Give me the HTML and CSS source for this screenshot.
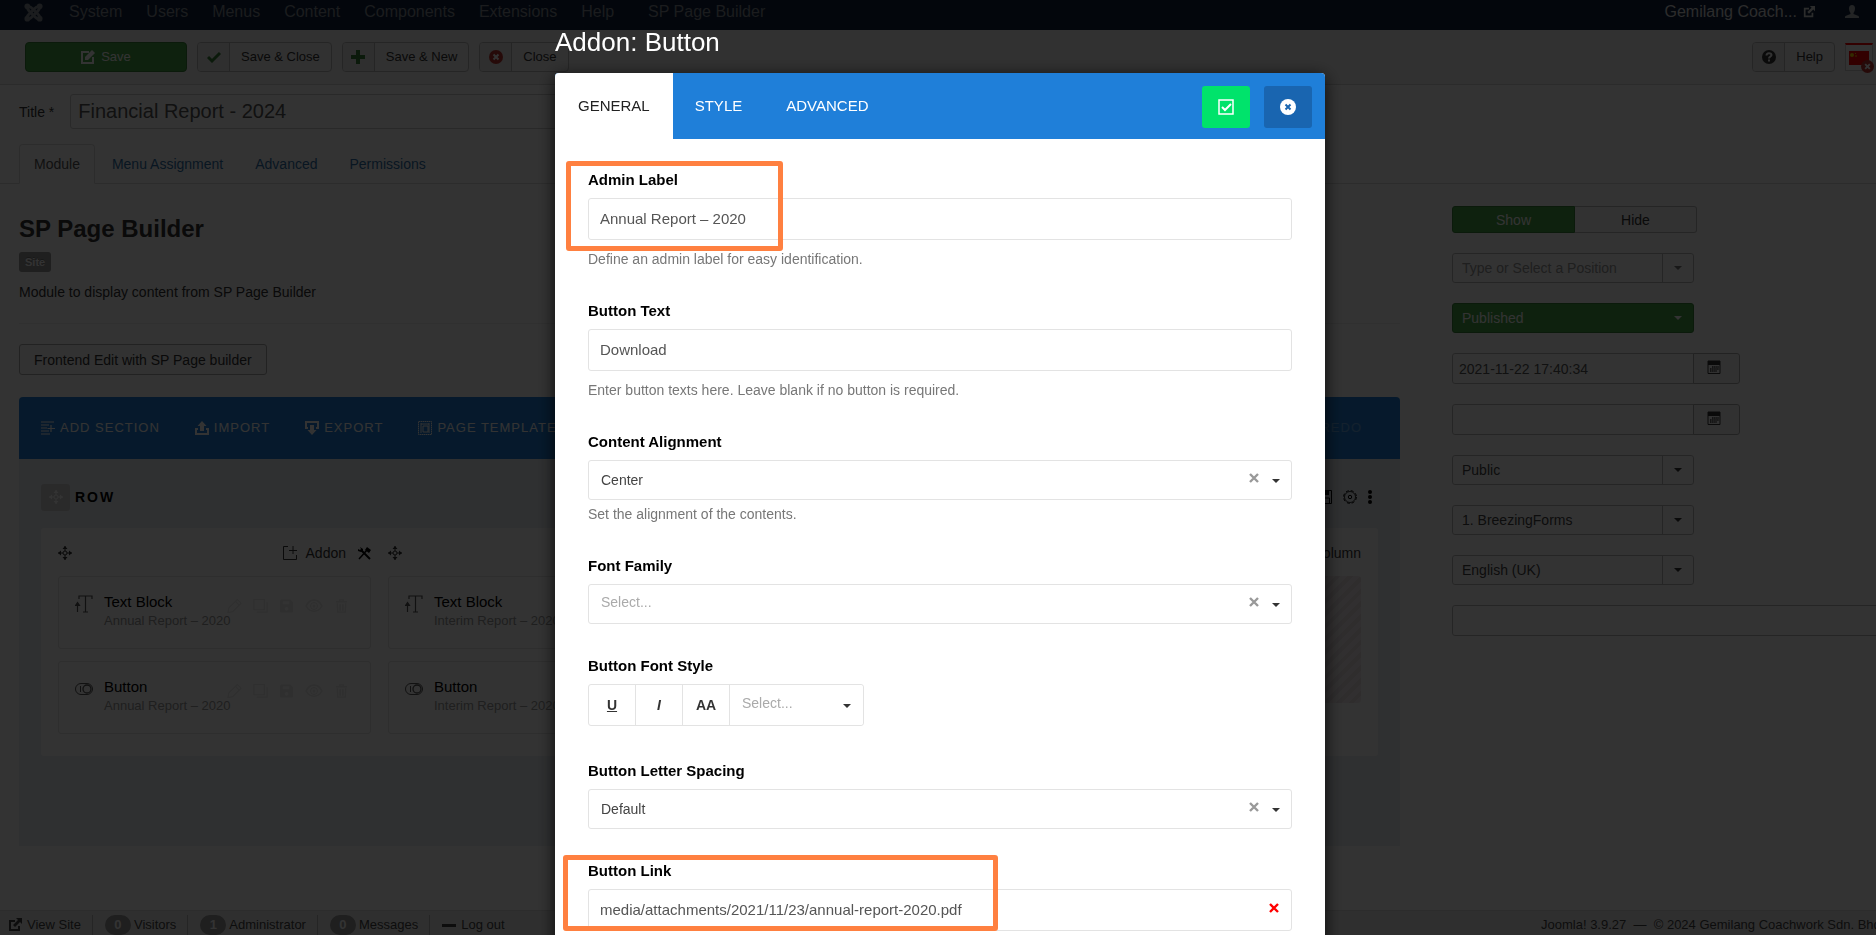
FILE: index.html
```
<!DOCTYPE html>
<html lang="en">
<head>
  <meta charset="UTF-8">
  <title>Modules: SP Page Builder</title>
  <meta name="viewport" content="width=device-width, initial-scale=1.0">
  <link rel="stylesheet" href="styles.css">
</head>
<body>
  <!-- icon set -->
  <svg class="sprite" aria-hidden="true">
    <symbol id="i-joomla" viewBox="0 0 20 20"><g fill="none" stroke="currentColor" stroke-width="3"><path d="M4 4c3-1 4 1 6 3l5 5c2 2 2 3 1 4"/><path d="M16 4c-3-1-4 1-6 3l-5 5c-2 2-2 3-1 4"/><path d="M4 4c-1 3 1 4 3 6l5 5c2 2 3 2 4 1"/><path d="M16 4c1 3-1 4-3 6l-5 5c-2 2-3 2-4 1"/></g><g fill="currentColor"><circle cx="3.500" cy="3.500" r="3"/><circle cx="16.500" cy="3.500" r="3"/><circle cx="3.500" cy="16.500" r="3"/><circle cx="16.500" cy="16.500" r="3"/></g></symbol>
    <symbol id="i-out" viewBox="0 0 14 14"><path d="M7 3H2v9h9V8" fill="none" stroke="currentColor" stroke-width="2"/><path d="M8 0h6v6l-2-2-5 5-2-2 5-5z" fill="currentColor"/></symbol>
    <symbol id="i-user" viewBox="0 0 14 14"><path d="M7 0c2 0 3 1.500 3 3.500S9 7 8.500 8v1l5 2c.5.5.5 1 .5 2H0c0-1 0-1.500.5-2l5-2V8C5 7 4 5.500 4 3.500S5 0 7 0z" fill="currentColor"/></symbol>
    <symbol id="i-edit" viewBox="0 0 14 14"><path d="M8 2H1v11h11V7" fill="none" stroke="currentColor" stroke-width="2"/><path d="M4 7l6-6 1-1 3 3-1 1-6 6H4z" fill="currentColor"/></symbol>
    <symbol id="i-check" viewBox="0 0 14 14"><path d="M1 7l4 4 8-8" fill="none" stroke="currentColor" stroke-width="3"/></symbol>
    <symbol id="i-plus" viewBox="0 0 14 14"><path d="M7 0v14M0 7h14" stroke="currentColor" stroke-width="4"/></symbol>
    <symbol id="i-cancel" viewBox="0 0 14 14"><circle cx="7" cy="7" r="7" fill="currentColor"/><path d="M4.500 4.500l5 5M9.500 4.500l-5 5" stroke="#fff" stroke-width="2"/></symbol>
    <symbol id="i-help" viewBox="0 0 14 14"><circle cx="7" cy="7" r="7" fill="currentColor"/><path d="M4.500 5.500C4.500 2.500 9.500 2.500 9.500 5c0 1.500-2.500 1.500-2.500 3.500M7 9.500v2" fill="none" stroke="#fff" stroke-width="2"/></symbol>
    <symbol id="i-calendar" viewBox="0 0 14 14"><path d="M1 1h12v12.500H1z" fill="none" stroke="currentColor"/><path d="M1 1h12v4H1z" fill="currentColor"/><path d="M5 7h7M3 9h9M3 11h7" stroke="currentColor" stroke-width="1.500" stroke-dasharray="1.500 .6"/></symbol>
    <symbol id="i-section" viewBox="0 0 14 14"><path d="M0 1h13M0 4h8M0 7h6M0 10h8M0 13h9M10 4v7M6.500 7.500H14" stroke="currentColor" stroke-width="1.200"/></symbol>
    <symbol id="i-import" viewBox="0 0 14 14"><path d="M7 0l4.500 5H9v5H5V5H2.500z" fill="currentColor"/><path d="M3 8H1v5h12V8h-2" fill="none" stroke="currentColor" stroke-width="2"/></symbol>
    <symbol id="i-export" viewBox="0 0 14 14"><path d="M7 14l4.500-5H9V4H5v5H2.500z" fill="currentColor"/><path d="M3 7H1V1h12v6h-2" fill="none" stroke="currentColor" stroke-width="2"/></symbol>
    <symbol id="i-pages" viewBox="0 0 14 14"><path d="M.5.5h13v13H.5z" fill="none" stroke="currentColor" stroke-dasharray="1.500 .5"/><path d="M3 2v10M11 2v10M3 3h8M5 5h5v6H5z" fill="none" stroke="currentColor"/></symbol>
    <symbol id="i-move" viewBox="0 0 14 14"><circle cx="7" cy="7" r="2" fill="none" stroke="currentColor"/><path d="M7 0v5M7 9v5M0 7h5M9 7h5" fill="none" stroke="currentColor"/><path d="M7 0l2.500 3h-5zM7 14l2.500-3h-5zM0 7l3-2.500v5zM14 7l-3-2.500v5z" fill="currentColor"/></symbol>
    <symbol id="i-addon" viewBox="0 0 14 14"><path d="M5 .5H.5v13h13V9M10 0v8M6 4.500h8" fill="none" stroke="currentColor"/></symbol>
    <symbol id="i-tools" viewBox="0 0 14 14"><path d="M4 4l9 9" stroke="currentColor" stroke-width="2"/><path d="M10 4l-8 9" stroke="currentColor" stroke-width="1.500"/><path d="M3 1l3 2v2L4 6 1 5V3l2 1 1-1zM10 1l4 3-2 3-4-3z" fill="currentColor"/></symbol>
    <symbol id="i-text" viewBox="0 0 18 18"><path d="M4 4V1h13v3M10.500 1v16M8 17h5M2.500 17V8M.5 10.500l2-3 2 3z" fill="none" stroke="currentColor" stroke-width="1.200"/></symbol>
    <symbol id="i-toggle" viewBox="0 0 18 12"><rect x=".5" y=".5" width="17" height="11" rx="5.500" fill="none" stroke="currentColor"/><circle cx="12" cy="6" r="4" fill="none" stroke="currentColor" stroke-width="1.300"/><path d="M5.500 3v6" stroke="currentColor"/></symbol>
    <symbol id="i-pencil" viewBox="0 0 16 16"><path d="M1 15l1-5 9-9 4 4-9 9zM9 3l4 4" fill="none" stroke="currentColor" stroke-width="1.200"/></symbol>
    <symbol id="i-copy" viewBox="0 0 16 16"><path d="M1 1h11v11H1zM4 14.500h11V4" fill="none" stroke="currentColor" stroke-width="1.200"/></symbol>
    <symbol id="i-save" viewBox="0 0 16 16"><path d="M1 3q0-2 2-2h9l3 3v9q0 2-2 2H3q-2 0-2-2zM4 3v3h7V3zM8 9a2 2 0 1 0 .1 0z" fill="currentColor" fill-rule="evenodd"/></symbol>
    <symbol id="i-eye" viewBox="0 0 18 16"><path d="M1 8c4-8 12-8 16 0-4 7-12 7-16 0z" fill="none" stroke="currentColor" stroke-width="1.500"/><circle cx="9" cy="8" r="3.500" fill="none" stroke="currentColor"/><circle cx="9" cy="8" r="1.500" fill="currentColor"/></symbol>
    <symbol id="i-trash" viewBox="0 0 16 16"><path d="M2 3.500h12M6 3V1.500h4V3M3.500 5l.5 9.500h8l.5-9.500M6.500 6v7M9.500 6v7" fill="none" stroke="currentColor" stroke-width="1.500"/></symbol>
    <symbol id="i-floppy" viewBox="0 0 14 14"><path d="M.5.500h13v13H.500z" fill="none" stroke="currentColor"/><path d="M3 1h8v4H3z" fill="currentColor"/><path d="M2.500 13V8h9v5" fill="none" stroke="currentColor"/></symbol>
    <symbol id="i-gear" viewBox="0 0 14 14"><circle cx="7" cy="7" r="6.400" fill="none" stroke="currentColor" stroke-dasharray="3 2.026"/><circle cx="7" cy="7" r="5.500" fill="none" stroke="currentColor" stroke-width=".8"/><circle cx="7" cy="7" r="1.700" fill="none" stroke="currentColor"/></symbol>
    <symbol id="i-dots" viewBox="0 0 4 14"><g fill="currentColor"><circle cx="2" cy="2" r="2"/><circle cx="2" cy="7" r="2"/><circle cx="2" cy="12" r="2"/></g></symbol>
    <symbol id="i-apply" viewBox="0 0 16 16"><path d="M1 1h14v14H1z" fill="none" stroke="currentColor" stroke-width="1.500"/><path d="M4 8l3 3 6-6" fill="none" stroke="currentColor" stroke-width="2"/></symbol>
    <symbol id="i-close" viewBox="0 0 16 16"><circle cx="8" cy="8" r="8" fill="currentColor"/><path d="M5.500 5.500l5 5M10.500 5.500l-5 5" stroke="#1965b0" stroke-width="2"/></symbol>
    <symbol id="i-x" viewBox="0 0 10 10"><path d="M1 1l8 8M9 1L1 9" stroke="currentColor" stroke-width="2.400"/></symbol>
  </svg>

  <nav class="navbar">
    <a href="#" class="brand" aria-label="Joomla"><svg><use href="#i-joomla"/></svg></a>
    <a href="#">System</a>
    <a href="#">Users</a>
    <a href="#">Menus</a>
    <a href="#">Content</a>
    <a href="#">Components</a>
    <a href="#">Extensions</a>
    <a href="#">Help</a>
    <a href="#" class="extra">SP Page Builder</a>
    <a href="#" class="site">Gemilang Coach... <svg class="ico"><use href="#i-out"/></svg></a>
    <a href="#" class="user" aria-label="User menu"><svg class="ico"><use href="#i-user"/></svg></a>
  </nav>

  <div class="subhead">
    <button class="btn-save"><svg class="ico"><use href="#i-edit"/></svg>Save</button>
    <button class="btn"><span class="btn-ico green"><svg class="ico"><use href="#i-check"/></svg></span><span class="btn-text">Save &amp; Close</span></button>
    <button class="btn"><span class="btn-ico green"><svg class="ico"><use href="#i-plus"/></svg></span><span class="btn-text">Save &amp; New</span></button>
    <button class="btn"><span class="btn-ico red"><svg class="ico"><use href="#i-cancel"/></svg></span><span class="btn-text">Close</span></button>
    <button class="btn btn-help"><span class="btn-ico"><svg class="ico"><use href="#i-help"/></svg></span><span class="btn-text">Help</span></button>
    <button class="flag" aria-label="Chinese">
      <svg class="flag-img" viewBox="0 0 20 14"><path d="M0 0h20v14H0z" fill="#f00"/><circle cx="3" cy="4" r="2" fill="#fd0"/><path d="M6 2l1 1M7 4v2" stroke="#fd0"/></svg>
      <svg class="flag-badge"><use href="#i-cancel"/></svg>
    </button>
  </div>

  <div class="title-row">
    <label for="title">Title *</label>
    <input id="title" type="text" value="Financial Report - 2024">
  </div>

  <ul class="tabs">
    <li><a href="#" class="active">Module</a></li>
    <li><a href="#">Menu Assignment</a></li>
    <li><a href="#">Advanced</a></li>
    <li><a href="#">Permissions</a></li>
  </ul>

  <div class="content">
    <main>
      <h3>SP Page Builder</h3>
      <span class="badge-site">Site</span>
      <p class="desc">Module to display content from SP Page Builder</p>
      <hr>
      <button class="btn-frontend">Frontend Edit with SP Page builder</button>

      <div class="builder">
        <div class="builder-bar">
          <a href="#"><svg class="ico"><use href="#i-section"/></svg>ADD SECTION</a>
          <a href="#"><svg class="ico"><use href="#i-import"/></svg>IMPORT</a>
          <a href="#"><svg class="ico"><use href="#i-export"/></svg>EXPORT</a>
          <a href="#"><svg class="ico"><use href="#i-pages"/></svg>PAGE TEMPLATES</a>
          <a href="#" class="redo">REDO</a>
        </div>
        <div class="builder-row">
          <div class="row-head">
            <span class="row-move"><svg class="ico"><use href="#i-move"/></svg></span>
            <strong>ROW</strong>
            <div class="row-tools">
              <svg class="ico"><use href="#i-floppy"/></svg>
              <svg class="ico"><use href="#i-gear"/></svg>
              <svg class="dots"><use href="#i-dots"/></svg>
            </div>
          </div>
          <div class="columns" id="columns"></div>
        </div>
      </div>
    </main>

    <aside>
      <div class="switch">
        <button class="on">Show</button><button>Hide</button>
      </div>
      <div class="pick muted"><select aria-label="Position"><option>Type or Select a Position</option></select></div>
      <div class="pick published"><select aria-label="Status"><option>Published</option></select></div>
      <div class="date"><input type="text" aria-label="Start Publishing" value="2021-11-22 17:40:34"><button aria-label="Open calendar"><svg class="ico"><use href="#i-calendar"/></svg></button></div>
      <div class="date"><input type="text" aria-label="Finish Publishing"><button aria-label="Open calendar"><svg class="ico"><use href="#i-calendar"/></svg></button></div>
      <div class="pick"><select aria-label="Access"><option>Public</option></select></div>
      <div class="pick"><select aria-label="Ordering"><option>1. BreezingForms</option></select></div>
      <div class="pick"><select aria-label="Language"><option>English (UK)</option></select></div>
      <input class="note" type="text" aria-label="Note">
    </aside>
  </div>

  <footer>
    <a href="#"><svg class="ico"><use href="#i-out"/></svg>View Site</a>
    <span><b>0</b>Visitors</span>
    <span><b>1</b>Administrator</span>
    <span><b>0</b>Messages</span>
    <a href="#"><i class="dash"></i>Log out</a>
    <p>Joomla! 3.9.27 &nbsp;—&nbsp; © 2024 Gemilang Coachwork Sdn. Bhd.</p>
  </footer>

  <!-- addon settings modal -->
  <div class="overlay">
    <div class="dialog" role="dialog" aria-labelledby="dialogTitle">
      <h2 id="dialogTitle">Addon: Button</h2>
      <div class="modal">
        <div class="modal-head">
          <button class="mtab active">GENERAL</button>
          <button class="mtab">STYLE</button>
          <button class="mtab">ADVANCED</button>
          <div class="modal-actions">
            <button class="apply" aria-label="Apply"><svg><use href="#i-apply"/></svg></button>
            <button class="close" aria-label="Close"><svg><use href="#i-close"/></svg></button>
          </div>
        </div>
        <div class="modal-body">
          <div class="field">
            <label for="adminLabel">Admin Label</label>
            <input id="adminLabel" type="text" value="Annual Report – 2020">
            <p>Define an admin label for easy identification.</p>
            <span class="mark mark-label"></span>
          </div>
          <div class="field">
            <label for="buttonText">Button Text</label>
            <input id="buttonText" type="text" value="Download">
            <p>Enter button texts here. Leave blank if no button is required.</p>
          </div>
          <div class="field">
            <label for="alignment">Content Alignment</label>
            <div class="choose">
              <select id="alignment"><option>Center</option></select>
              <button class="clear" aria-label="Clear"><svg><use href="#i-x"/></svg></button>
            </div>
            <p class="close-by">Set the alignment of the contents.</p>
          </div>
          <div class="field">
            <label for="fontFamily">Font Family</label>
            <div class="choose">
              <select id="fontFamily" class="empty"><option>Select...</option></select>
              <button class="clear" aria-label="Clear"><svg><use href="#i-x"/></svg></button>
            </div>
          </div>
          <div class="field">
            <label for="fontWeight">Button Font Style</label>
            <div class="font-style">
              <button><u>U</u></button><button><em>I</em></button><button>AA</button>
              <div class="choose"><select id="fontWeight" class="empty"><option>Select...</option></select></div>
            </div>
          </div>
          <div class="field">
            <label for="spacing">Button Letter Spacing</label>
            <div class="choose">
              <select id="spacing"><option>Default</option></select>
              <button class="clear" aria-label="Clear"><svg><use href="#i-x"/></svg></button>
            </div>
          </div>
          <div class="field">
            <label for="link">Button Link</label>
            <div class="link-box">
              <input id="link" type="text" value="media/attachments/2021/11/23/annual-report-2020.pdf">
              <button class="clear remove" aria-label="Remove link"><svg><use href="#i-x"/></svg></button>
            </div>
            <span class="mark mark-link"></span>
          </div>
        </div>
      </div>
    </div>
  </div>

  <script>
    const columns = ['Annual Report – 2020', 'Interim Report – 2020', 'Annual Report – 2019', ''];
    const icon = (name, cls = 'ico') => `<svg class="${cls}"><use href="#i-${name}"/></svg>`;

    function card(type, name, label) {
      return `
  <div class="addon">
    ${icon(type, 'addon-ico')}
    <div><h4>${name}</h4><p>${label}</p></div>
    <div class="addon-actions">${['pencil', 'copy', 'save', 'eye', 'trash'].map(n => icon(n, 'ico act-' + n)).join('')}</div>
  </div>`;
    }

    // an empty label means the column has no addons yet
    document.getElementById('columns').innerHTML = columns.map(label => `
  <div class="column">
    <div class="column-head">
      ${icon('move')}
      ${label ? `<a href="#">${icon('addon')}Addon</a>${icon('tools')}` : '<a href="#">Column</a>'}
    </div>
    ${label ? card('text', 'Text Block', label) + card('toggle', 'Button', label) : '<div class="hatch"></div>'}
  </div>`).join('');
  </script>
</body>
</html>
```
FILE: styles.css
```
* { box-sizing:border-box; }
body {
  margin:0; min-height:100vh; overflow:hidden; background:#fff; color:#333;
  font-family:"Liberation Sans",Arial,sans-serif; font-size:14px; line-height:20px;
}
a { color:inherit; text-decoration:none; }
button, input, select { font:inherit; color:inherit; margin:0; }
button { padding:0; cursor:pointer; }
select { appearance:none; cursor:pointer; }
h2, h3, h4, p, ul { margin:0; padding:0; }
svg { display:block; }
.sprite { position:absolute; width:0; height:0; }
.ico { width:14px; height:14px; flex:none; }

/* top bar */
.navbar {
  height:30px; padding:0 17px 6px 24px; background:#10223e; color:#858b94;
  display:flex; align-items:center; gap:24px; font-size:16px; white-space:nowrap;
}
.brand { margin-right:2px; }
.brand svg { width:19px; height:19px; }
.navbar .extra { margin-left:10px; }
.navbar .site { margin-left:auto; color:#d9d9d9; display:flex; align-items:center; gap:6px; }
.navbar .site .ico { width:12px; }
.navbar .user { margin-left:6px; }
.navbar .user .ico { color:#b0b4ba; }

.subhead {
  height:55px; padding:0 3px 0 25px; background:#f2f2f2; border-bottom:1px solid #d5d5d5;
  display:flex; align-items:center; gap:10px; font-size:13px;
}
.btn-save {
  width:162px; height:30px; border:1px solid #378137; border-radius:4px; background:#46a546; color:#fff;
  display:flex; align-items:center; justify-content:center; gap:6px;
}
.btn {
  height:30px; border:1px solid #bbb; border-radius:4px; background:#f3f3f3; overflow:hidden;
  display:flex; align-items:center;
}
.btn-ico { width:32px; height:28px; border-right:1px solid #bbb; background:#e9e9e9; display:grid; place-items:center; }
.btn-text { padding:0 11px; }
.green { color:#378137; }
.red { color:#bd362f; }
.btn-help { margin-left:auto; }
.flag { position:relative; width:28px; height:28px; background:#fff; border:1px solid #ccc; border-top:2px solid #f00; }
.flag-img { width:20px; height:14px; margin:0 auto; }
.flag-badge { position:absolute; right:-2px; bottom:-3px; width:13px; height:13px; color:#bd362f; }

.title-row { display:flex; align-items:center; gap:16px; padding:9px 560px 15px 19px; }
.title-row input {
  flex:1; height:35px; padding:0 7px; border:1px solid #ccc; border-radius:3px; background:#fff;
  font-size:20px; color:#555;
}
.tabs { display:flex; gap:2px; padding:0 0 0 19px; list-style:none; border-bottom:1px solid #ddd; }
.tabs a {
  display:block; margin-bottom:-1px; padding:9px 14px; border:1px solid transparent; border-radius:4px 4px 0 0;
  color:#3071a9;
}
.tabs a.active { background:#fff; border-color:#ddd #ddd #fff; color:#555; }

.content { display:grid; grid-template-columns:minmax(0,1fr) 424px; gap:52px; padding:22px 0 0 19px; align-items:start; }

/* page builder */
h3 { font-size:24px; line-height:46px; }
.badge-site {
  display:inline-block; padding:0 6px; border-radius:3px; background:#999; color:#fff;
  font-size:11px; font-weight:bold; line-height:20px; text-shadow:0 -1px 0 rgba(0,0,0,.25); vertical-align:top;
}
.desc { margin-top:10px; }
hr { margin:21px 0 20px; border:0; border-top:1px solid #eee; }
.btn-frontend { height:31px; padding:0 14px; border:1px solid #aaa; border-radius:3px; background:#f8f8f8; }
.builder { margin-top:22px; min-height:449px; background:#ebf0f5; border-radius:4px 4px 0 0; overflow:hidden; }
.builder-bar {
  height:62px; padding:0 38px 0 22px; background:#1f7fd9; color:#fff;
  display:flex; align-items:center; gap:35px; font-size:13px; letter-spacing:1px; white-space:nowrap;
}
.builder-bar a { display:flex; align-items:center; gap:5px; }
.builder-bar .redo { margin-left:auto; opacity:.3; }
.builder-row { padding:22px 22px 0; }
.row-head { display:flex; align-items:center; gap:5px; height:32px; margin-bottom:15px; color:#000; }
.row-head strong { letter-spacing:2px; }
.row-move { width:29px; height:27px; border-radius:3px; background:#d2d2d2; color:#fff; display:grid; place-items:center; }
.row-tools { margin-left:auto; margin-right:6px; display:flex; align-items:center; gap:11px; }
.dots { width:4px; height:14px; }
.columns {
  min-height:228px; padding:15px 17px; border-radius:3px; background:#fff;
  display:grid; grid-template-columns:repeat(4,minmax(0,1fr)); gap:17px;
}
.column-head { display:flex; align-items:center; gap:11px; height:20px; margin-bottom:13px; }
.column-head a { margin-left:auto; display:flex; align-items:center; gap:9px; }
.column-head > .ico:last-child { color:#000; }
.addon {
  position:relative; height:73px; padding:15px 16px; border:1px solid #e3e3e3; border-radius:3px;
  display:flex; gap:11px;
}
.addon + .addon { margin-top:12px; }
.addon-ico { width:18px; height:18px; margin-top:3px; color:#555; }
.addon h4 { font-size:15px; font-weight:normal; color:#000; }
.addon p { font-size:13px; line-height:18px; color:#999; }
.addon-actions { position:absolute; right:21px; top:21px; display:flex; gap:11px; color:#e8e8e8; }
.addon-actions .ico { width:15px; height:16px; }
.addon-actions .act-eye { width:18px; }
.hatch {
  height:127px; border-radius:3px;
  background:repeating-linear-gradient(135deg,#f5ecee 0 5px,#e9e0e2 5px 9px);
}

/* publishing options */
aside { display:flex; flex-direction:column; gap:20px; }
.switch { width:245px; height:27px; display:flex; }
.switch button { flex:1; border:1px solid #bbb; border-left:0; border-radius:0 3px 3px 0; background:#f8f8f8; }
.switch .on { border:1px solid #378137; border-radius:3px 0 0 3px; background:#46a546; color:#fff; }
.pick { position:relative; width:242px; }
.pick select { display:block; width:100%; height:30px; padding:0 40px 0 9px; border:1px solid #bbb; border-radius:3px; background:#fff; color:#444; }
.pick.muted select { color:#999; }
.pick::before { content:""; position:absolute; top:1px; bottom:1px; right:31px; border-left:1px solid #bbb; }
.pick::after, .choose::after {
  content:""; position:absolute; right:12px; top:13px; border:4px solid transparent; border-top-color:#333; border-bottom:0;
}
.pick.muted::after { border-top-color:#777; }
.pick.published select { background:#46a546; border-color:#378137; color:#fff; }
.pick.published::before { display:none; }
.pick.published::after { border-top-color:#fff; }
.date { display:flex; width:288px; height:31px; }
.date input { width:242px; padding:0 6px; border:1px solid #bbb; border-radius:3px 0 0 3px; background:#fff; color:#555; }
.date button { flex:1; margin-left:-1px; padding:0 0 4px 13px; border:1px solid #aaa; border-radius:0 3px 3px 0; background:#f6f6f6; }
.note { width:460px; height:31px; border:1px solid #bbb; border-radius:3px; background:#fff; }

footer {
  position:fixed; left:0; right:0; bottom:0; height:25px; padding:4px 0 0 8px; overflow:hidden;
  background:#ececec; border-top:1px solid #ddd; font-size:13px; color:#444;
  display:flex; align-items:center; white-space:nowrap;
}
footer a, footer span { display:flex; align-items:center; }
footer a { gap:5px; }
footer span { gap:3px; }
footer > * + *:not(p) { margin-left:11px; padding-left:12px; border-left:1px solid #bbb; }
footer b { width:26px; height:20px; border-radius:10px; background:#999; color:#fff; text-align:center; }
.dash { width:14px; height:3px; background:#444; }
footer p { margin-left:auto; width:335px; }

/* modal */
.overlay { position:fixed; inset:0; z-index:10; padding:27px 0 0 4px; overflow:hidden; background:rgba(0,0,0,.8); }
.dialog { width:770px; max-width:100%; margin:0 auto; }
.dialog h2 { margin-bottom:16px; color:#fff; font-size:26px; font-weight:normal; line-height:30px; }
.modal { min-height:100vh; border-radius:4px; background:#fff; overflow:hidden; box-shadow:0 4px 18px rgba(0,0,0,.8); }
.modal-head { display:flex; height:66px; background:#1f7fd9; }
.mtab { padding:0 22px; border:0; background:none; color:#fff; font-size:15px; }
.mtab.active { background:#fff; color:#222; padding:0 23px; }
.modal-actions { margin-left:auto; padding:13px; display:flex; gap:14px; }
.modal-actions button { width:48px; height:42px; border:0; border-radius:3px; color:#fff; display:grid; place-items:center; }
.modal-actions svg { width:16px; height:16px; }
.apply { background:#00e36b; }
.close { background:#1965b0; }
.modal-body { padding:31px 33px; display:flex; flex-direction:column; gap:32px; }
.field { position:relative; }
.field > label { display:block; margin-bottom:8px; font-size:15px; font-weight:bold; color:#000; }
.field input, .choose select { display:block; width:100%; height:42px; border:1px solid #e3e3e3; border-radius:3px; background:#fff; }
.field input { padding:0 11px 2px; font-size:15px; color:#555; }
.field p { margin-top:9px; color:#777; }
.field .close-by { margin-top:4px; }
.choose, .link-box { position:relative; }
.choose select { height:40px; padding:0 60px 0 12px; color:#444; }
.choose select.empty { padding-bottom:5px; color:#aaa; }
.choose::after { top:19px; }
.clear { position:absolute; right:33px; top:13px; border:0; background:none; color:#999; }
.clear svg { width:10px; height:10px; }
.clear.remove { right:13px; top:14px; color:#f00; }
.font-style { display:flex; width:276px; height:42px; margin-bottom:3px; border:1px solid #e3e3e3; border-radius:3px; }
.font-style button { width:47px; border:0; border-right:1px solid #e3e3e3; background:none; color:#333; font-weight:bold; }
.font-style .choose { flex:1; }
.font-style select { border:0; padding-right:20px; }
.mark { position:absolute; border:5px solid #ff8040; border-radius:3px; pointer-events:none; }
.mark-label { left:-22px; top:-9px; width:217px; height:90px; }
.mark-link { left:-25px; top:-6px; width:435px; height:76px; }
```
